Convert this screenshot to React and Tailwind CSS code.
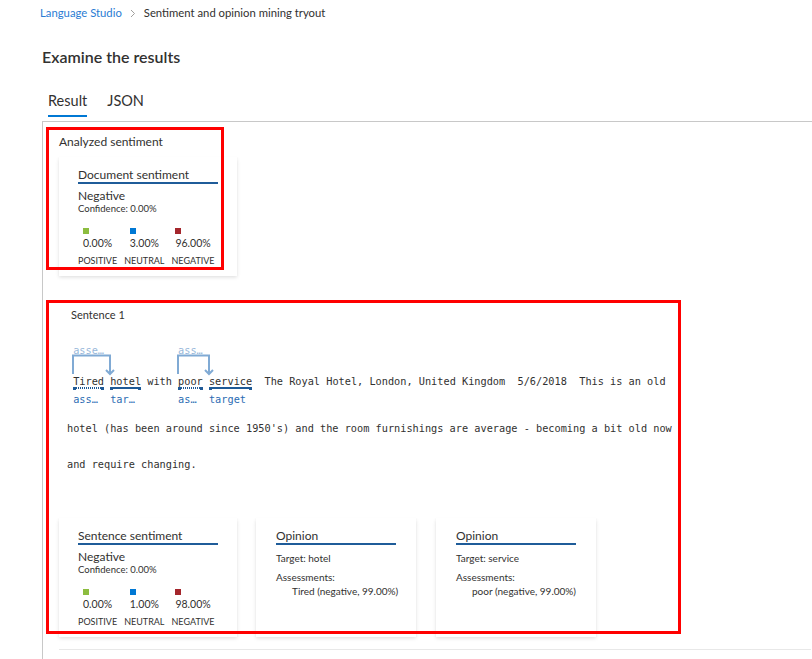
import React from 'react'

const mono = "font-['DejaVu_Sans_Mono',monospace]"

function SentimentCard({ title, label, confidence, values }) {
  return (
    <div className="w-[178px] h-[119px] shrink-0 bg-white px-[19px] pt-[11px] shadow-[0_1.6px_3.6px_rgba(0,0,0,0.13),0_0.3px_0.9px_rgba(0,0,0,0.11)]">
      <div className="text-[12px] leading-[14px] text-[#323130] border-b-2 border-[#1f5c99]">{title}</div>
      <div className="mt-[4px] text-[12px] leading-[16px] text-[#323130]">{label}</div>
      <div className="text-[9.5px] leading-[10px] text-[#323130]">Confidence: {confidence}</div>
      <div className="mt-[14px] flex gap-[7px]">
        {values.map((v) => (
          <div key={v.name} className="flex flex-col items-center">
            <div className="flex flex-col items-start">
              <span className={`w-[6px] h-[6px] ${v.color}`} />
              <span className="mt-[2px] text-[10.5px] leading-[14px] text-[#323130]">{v.value}</span>
            </div>
            <span className="mt-[5px] text-[9px] leading-[12px] text-[#323130]">{v.name}</span>
          </div>
        ))}
      </div>
    </div>
  )
}

function OpinionCard({ target, assessment }) {
  return (
    <div className="w-[160px] h-[119px] shrink-0 bg-white px-[20px] pt-[11px] shadow-[0_1.6px_3.6px_rgba(0,0,0,0.13),0_0.3px_0.9px_rgba(0,0,0,0.11)]">
      <div className="text-[12px] leading-[14px] text-[#323130] border-b-2 border-[#1f5c99]">Opinion</div>
      <div className="mt-[7px] text-[10px] leading-[12px] text-[#323130]">Target: {target}</div>
      <div className="mt-[7px] text-[10px] leading-[12px] text-[#323130]">Assessments:</div>
      <div className="mt-[2px] pl-[16px] text-[10px] leading-[12px] text-[#323130] whitespace-nowrap">{assessment}</div>
    </div>
  )
}

// annotated word: underline with end squares, label under it, optional bracket arrow above
function Tok({ text, kind, label, arrow }) {
  return (
    <span className="relative inline-block">
      {text}
      {arrow && (
        <>
          <span className="absolute left-0 top-[-31px] text-[#98b8da]">{arrow.label}</span>
          <svg
            className="absolute left-[-1px] top-[-19px] overflow-visible"
            width={arrow.span + 6}
            height="22"
            fill="none"
            stroke="#80aad4"
            strokeWidth="2"
          >
            <path d={`M1 20 V1.5 H${arrow.span + 1} V20`} />
            <path d={`M${arrow.span - 3} 16 L${arrow.span + 1} 20 L${arrow.span + 5} 16`} />
          </svg>
        </>
      )}
      <span className="absolute left-0 right-0 top-[13px] h-[4px] flex items-center">
        <span className="w-[3px] h-[3px] bg-[#1f5a96]" />
        {kind === 'target' ? (
          <span className="flex-1 h-[2px] bg-[#1f5a96]" />
        ) : (
          <span className="flex-1 h-[2px] bg-[repeating-linear-gradient(90deg,#1f5a96_0_1px,transparent_1px_2px)]" />
        )}
        <span className="w-[3px] h-[3px] bg-[#1f5a96]" />
      </span>
      <span className="absolute left-0 top-[18px] text-[#2b6cb3] whitespace-pre">{label}</span>
    </span>
  )
}

export default function App() {
  return (
    <div className="w-[812px] h-[659px] overflow-hidden bg-white font-['Lato',sans-serif] text-[#323130]">
      {/* Breadcrumb */}
      <div className="h-[26px] pl-[40px] flex items-center text-[11.3px]">
        <span className="text-[#2b7cd3]">Language Studio</span>
        <svg className="ml-[8px] mr-[8px]" width="6" height="9" viewBox="0 0 6 9" fill="none" stroke="#a19f9d" strokeWidth="1">
          <path d="M1 1 L4.5 4.5 L1 8" />
        </svg>
        <span>Sentiment and opinion mining tryout</span>
      </div>

      <div className="mt-[20px] pl-[42px] h-[22px] leading-[22px] text-[16px] font-semibold">Examine the results</div>

      {/* Tabs */}
      <div className="mt-[20px] pl-[48px] flex gap-[20px]">
        <div className="flex flex-col">
          <span className="pt-[3px] text-[14.5px] leading-[20px]">Result</span>
          <span className="mt-[4px] h-[2px] bg-[#0078d4]" />
        </div>
        <div className="flex flex-col">
          <span className="pt-[3px] text-[14.5px] leading-[20px]">JSON</span>
        </div>
      </div>

      {/* Result panel */}
      <div className="relative ml-[42px] mt-[4px] border-l border-t border-[#c8c8c8] pl-[16px] pt-[12px] pb-[20px]">
        <div className="text-[12px] leading-[16px]">Analyzed sentiment</div>
        <div className="mt-[7px]">
          <SentimentCard
            title="Document sentiment"
            label="Negative"
            confidence="0.00%"
            values={[
              { name: 'POSITIVE', value: '0.00%', color: 'bg-[#8cbd3f]' },
              { name: 'NEUTRAL', value: '3.00%', color: 'bg-[#0078d4]' },
              { name: 'NEGATIVE', value: '96.00%', color: 'bg-[#a4262c]' },
            ]}
          />
        </div>

        {/* Sentence */}
        <div className="mt-[31px] w-[752px] border-b border-[#e8e8e8] pb-[12px]">
          <div className="pl-[12px] text-[11px] leading-[16px]">Sentence 1</div>
          <div className={`pl-[8px] ${mono} text-[10.25px] leading-[16px] text-[#323130]`}>
            <div className="mt-[50px] whitespace-pre">
              {' '}
              <Tok text="Tired" kind="assess" label="ass…" arrow={{ label: 'asse…', span: 37 }} />
              {' '}
              <Tok text="hotel" kind="target" label="tar…" />
              {' with '}
              <Tok text="poor" kind="assess" label="as…" arrow={{ label: 'ass…', span: 31 }} />
              {' '}
              <Tok text="service" kind="target" label="target" />
              {'  The Royal Hotel, London, United Kingdom  5/6/2018  This is an old'}
            </div>
            <div className="mt-[31px] whitespace-pre">
              {"hotel (has been around since 1950's) and the room furnishings are average - becoming a bit old now"}
            </div>
            <div className="mt-[20px] whitespace-pre">and require changing.</div>
          </div>

          <div className="mt-[46px] flex gap-[19px]">
            <SentimentCard
              title="Sentence sentiment"
              label="Negative"
              confidence="0.00%"
              values={[
                { name: 'POSITIVE', value: '0.00%', color: 'bg-[#8cbd3f]' },
                { name: 'NEUTRAL', value: '1.00%', color: 'bg-[#0078d4]' },
                { name: 'NEGATIVE', value: '98.00%', color: 'bg-[#a4262c]' },
              ]}
            />
            <OpinionCard target="hotel" assessment="Tired (negative, 99.00%)" />
            <div className="ml-px">
              <OpinionCard target="service" assessment="poor (negative, 99.00%)" />
            </div>
          </div>
        </div>

        {/* highlight boxes drawn over the screenshot */}
        <div className="absolute left-[3px] top-[5px] w-[178px] h-[143px] border-[3px] border-[#ff0000] pointer-events-none" />
        <div className="absolute left-[3px] top-[178px] w-[635px] h-[334px] border-[3px] border-[#ff0000] pointer-events-none" />
      </div>
    </div>
  )
}
